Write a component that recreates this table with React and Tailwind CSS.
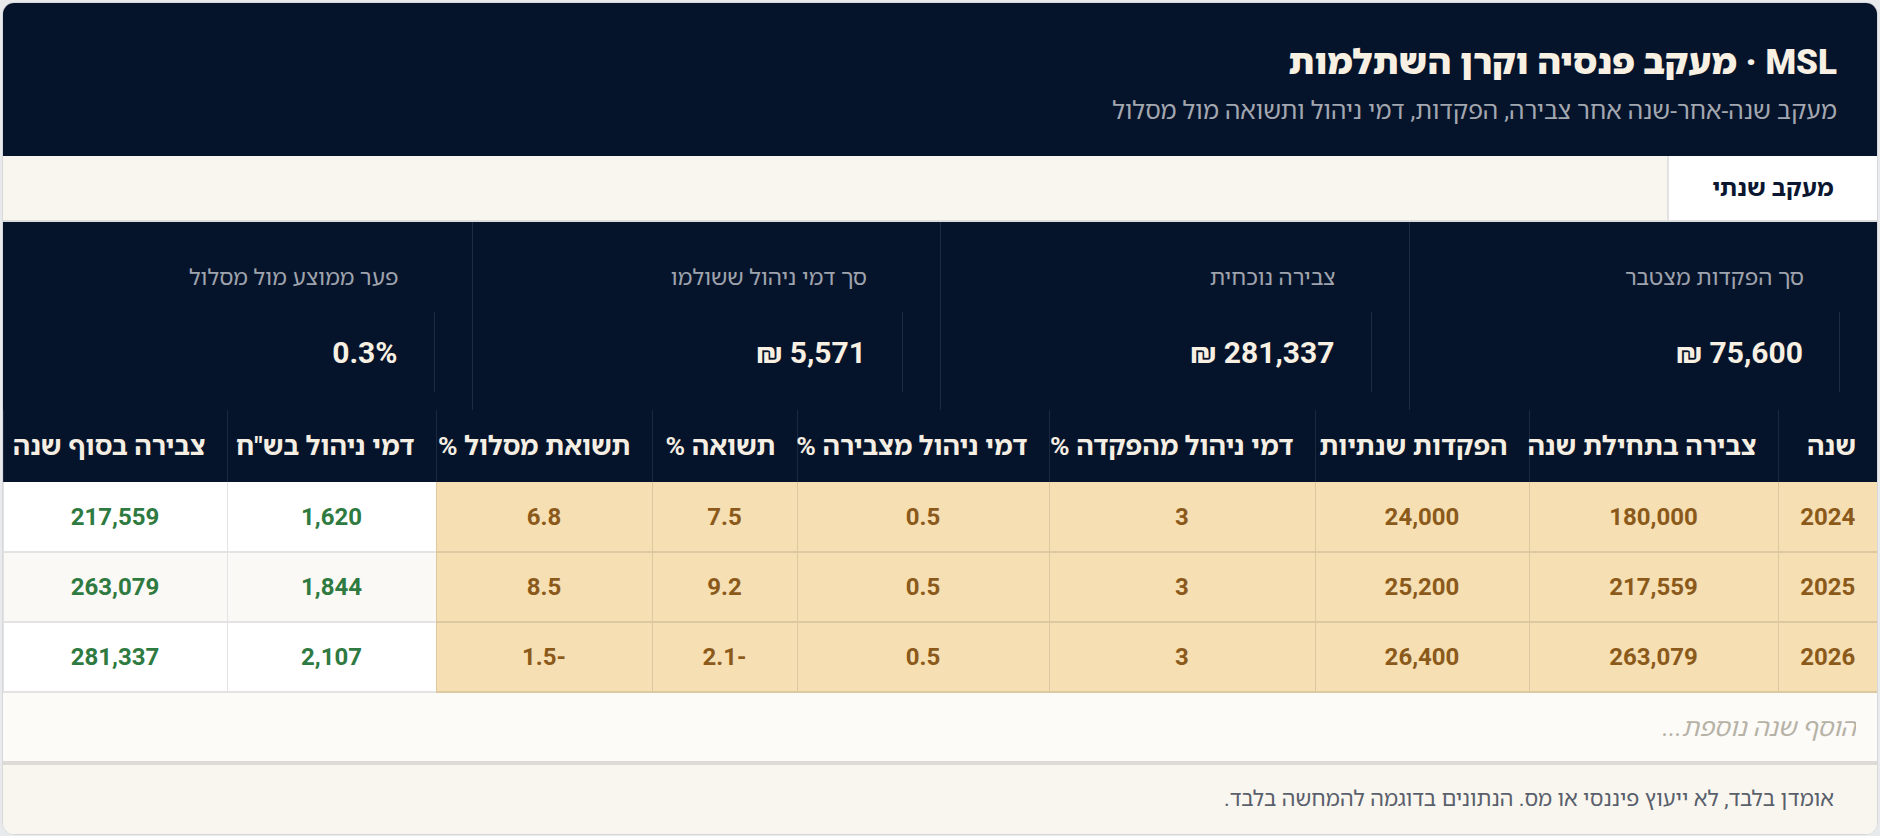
import { useState } from "react";

const stats = [
  { label: "סך הפקדות מצטבר", value: "75,600 ₪" },
  { label: "צבירה נוכחית", value: "281,337 ₪" },
  { label: "סך דמי ניהול ששולמו", value: "5,571 ₪" },
  { label: "פער ממוצע מול מסלול", value: "0.3%" },
];

const columns = [
  { title: "שנה", w: "w-[99px]" },
  { title: "צבירה בתחילת שנה", w: "w-[249px]" },
  { title: "הפקדות שנתיות", w: "w-[214px]" },
  { title: "דמי ניהול מהפקדה %", w: "w-[266px]" },
  { title: "דמי ניהול מצבירה %", w: "w-[252px]" },
  { title: "תשואה %", w: "w-[145px]" },
  { title: "תשואת מסלול %", w: "w-[216px]" },
  { title: 'דמי ניהול בש"ח', w: "w-[209px]" },
  { title: "צבירה בסוף שנה", w: "w-[224px]" },
];

const rows = [
  { year: "2024", start: "180,000", dep: "24,000", feeDep: "3", feeAcc: "0.5", ret: "7.5", track: "6.8", fee: "1,620", end: "217,559" },
  { year: "2025", start: "217,559", dep: "25,200", feeDep: "3", feeAcc: "0.5", ret: "9.2", track: "8.5", fee: "1,844", end: "263,079" },
  { year: "2026", start: "263,079", dep: "26,400", feeDep: "3", feeAcc: "0.5", ret: "-2.1", track: "-1.5", fee: "2,107", end: "281,337" },
];

function App() {
  const [newYear, setNewYear] = useState("");

  return (
    <div
      className="min-h-screen bg-[#e9eaec] p-[2px]"
      style={{ fontFamily: "Roboto, 'Noto Sans Hebrew', system-ui" }}
    >
      <div dir="rtl" className="rounded-xl overflow-hidden border border-[#d6d8db] bg-white">
        {/* Header */}
        <div className="bg-[#06142b] h-[153px] pr-[40px] pt-[40px]">
          <h1 className="text-[35px] leading-[40px] font-black text-[#f7f0e3]">
            MSL · מעקב פנסיה וקרן השתלמות
          </h1>
          <p className="mt-[14px] text-[24.5px] leading-[28px] text-[#a3a7b0]">
            מעקב שנה-אחר-שנה אחר צבירה, הפקדות, דמי ניהול ותשואה מול מסלול
          </p>
        </div>

        {/* Tabs */}
        <div className="flex bg-[#f9f6ef] border-b-2 border-[#dcdcdc] h-[66px]">
          <button className="w-[210px] bg-white border-l-2 border-[#e2e2e2] text-[24px] font-bold text-[#0b1730]">
            מעקב שנתי
          </button>
        </div>

        {/* Stats */}
        <div className="grid grid-cols-4 bg-[#06142b]">
          {stats.map((s, i) => (
            <div
              key={s.label}
              className={`pr-[37px] pt-[42px] pb-[18px] ${i < 3 ? "border-l border-[#1d2a42]" : ""}`}
            >
              <div className="pr-[36px] text-[22.5px] leading-[26px] text-[#9ea3ad]">{s.label}</div>
              <div className="mt-[22px] h-[80px] flex items-center border-r border-[#1d2a42] pr-[36px] text-[30px] font-bold text-[#f7f0e3]">
                {s.value}
              </div>
            </div>
          ))}
        </div>

        {/* Table */}
        <table className="w-full table-fixed border-collapse">
          <thead>
            <tr className="bg-[#06142b]">
              {columns.map((c) => (
                <th
                  key={c.title}
                  className={`${c.w} h-[72px] px-[21px] text-right whitespace-nowrap text-[26.5px] font-bold text-[#f5eee2] border-l border-[#1b2940]`}
                >
                  {c.title}
                </th>
              ))}
            </tr>
          </thead>
          <tbody>
            {rows.map((r, i) => {
              const white = i === 1 ? "bg-[#fbf9f5]" : "bg-white";
              const tan = "bg-[#f5dfb3] text-[#8b5a1b] border-l border-b-2 border-[#dcc9a2]";
              const grn = `${white} text-[#2e7a40] border-l border-b-2 border-[#e3e3e3]`;
              return (
                <tr key={r.year} className="h-[70px] text-[24px] font-bold text-center">
                  <td className={tan}>{r.year}</td>
                  <td className={tan}>{r.start}</td>
                  <td className={tan}>{r.dep}</td>
                  <td className={tan}>{r.feeDep}</td>
                  <td className={tan}>{r.feeAcc}</td>
                  <td className={tan}>{r.ret}</td>
                  <td className={tan}>{r.track}</td>
                  <td className={grn}>{r.fee}</td>
                  <td className={grn}>{r.end}</td>
                </tr>
              );
            })}
          </tbody>
        </table>

        {/* Add row */}
        <div className="bg-[#fcfbf8] border-b-4 border-[#dddbd7] h-[72px] flex items-center">
          <input
            value={newYear}
            onChange={(e) => setNewYear(e.target.value)}
            placeholder="הוסף שנה נוספת..."
            className="w-full h-full bg-transparent pr-[21px] text-[25px] italic text-[#333] placeholder:text-[#b7b2a6] outline-none"
          />
        </div>

        {/* Footer */}
        <div className="bg-[#f9f6ef] h-[69px] flex items-center pr-[43px] text-[21.7px] text-[#59606c]">
          אומדן בלבד, לא ייעוץ פיננסי או מס. הנתונים בדוגמה להמחשה בלבד.
        </div>
      </div>
    </div>
  );
}

export default App;
